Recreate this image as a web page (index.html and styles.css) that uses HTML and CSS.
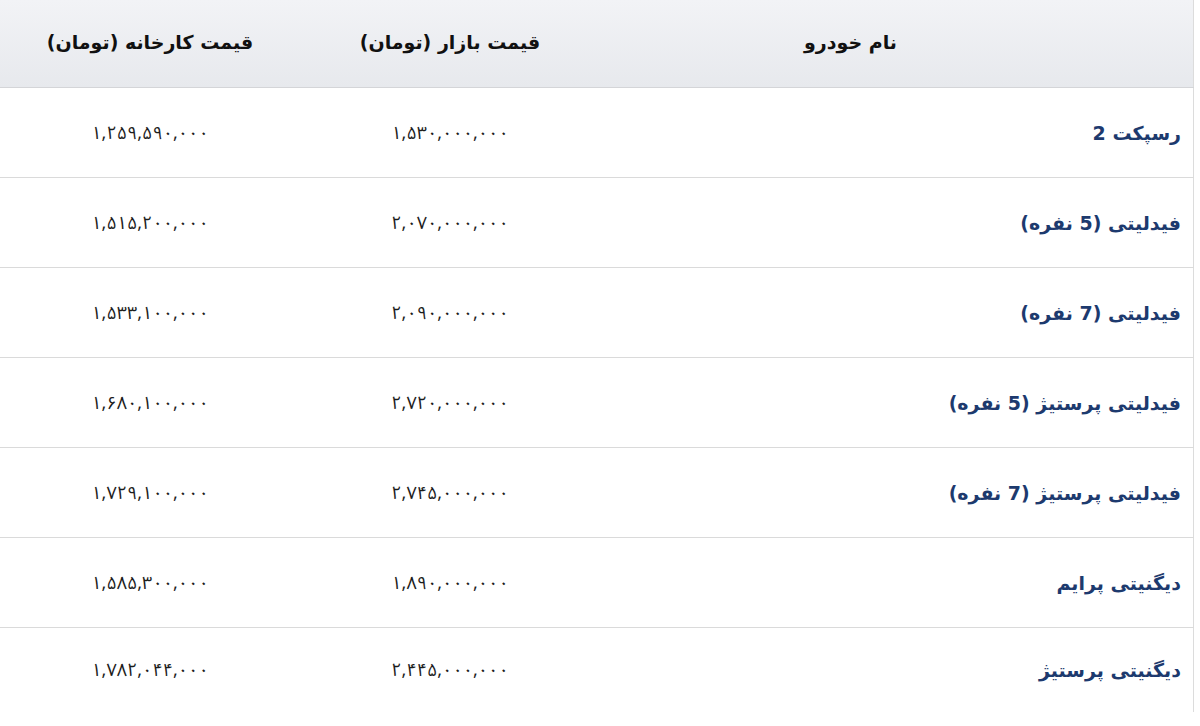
FILE: index.html
```html
<!DOCTYPE html>
<html lang="fa" dir="rtl">
<head>
<meta charset="utf-8">
<title>قیمت خودرو</title>
<link rel="stylesheet" href="styles.css">
</head>
<body>
<table class="prices">
  <thead>
    <tr>
      <th class="col-name">نام خودرو</th>
      <th class="col-market">قیمت بازار (تومان)</th>
      <th class="col-factory">قیمت کارخانه (تومان)</th>
    </tr>
  </thead>
  <tbody>
    <tr><td class="car">رسپکت 2</td><td class="num">۱,۵۳۰,۰۰۰,۰۰۰</td><td class="num">۱,۲۵۹,۵۹۰,۰۰۰</td></tr>
    <tr><td class="car">فیدلیتی (5 نفره)</td><td class="num">۲,۰۷۰,۰۰۰,۰۰۰</td><td class="num">۱,۵۱۵,۲۰۰,۰۰۰</td></tr>
    <tr><td class="car">فیدلیتی (7 نفره)</td><td class="num">۲,۰۹۰,۰۰۰,۰۰۰</td><td class="num">۱,۵۳۳,۱۰۰,۰۰۰</td></tr>
    <tr><td class="car">فیدلیتی پرستیژ (5 نفره)</td><td class="num">۲,۷۲۰,۰۰۰,۰۰۰</td><td class="num">۱,۶۸۰,۱۰۰,۰۰۰</td></tr>
    <tr><td class="car">فیدلیتی پرستیژ (7 نفره)</td><td class="num">۲,۷۴۵,۰۰۰,۰۰۰</td><td class="num">۱,۷۲۹,۱۰۰,۰۰۰</td></tr>
    <tr><td class="car">دیگنیتی پرایم</td><td class="num">۱,۸۹۰,۰۰۰,۰۰۰</td><td class="num">۱,۵۸۵,۳۰۰,۰۰۰</td></tr>
    <tr><td class="car">دیگنیتی پرستیژ</td><td class="num">۲,۴۴۵,۰۰۰,۰۰۰</td><td class="num">۱,۷۸۲,۰۴۴,۰۰۰</td></tr>
  </tbody>
</table>
</body>
</html>
```
FILE: styles.css
```css
html, body {
  margin: 0;
  padding: 0;
  background: #ffffff;
}
body {
  width: 1200px;
  font-family: "DejaVu Sans", "Noto Sans", sans-serif;
}
.prices {
  width: 1193px;
  margin: 0 auto 0 0;
  border-collapse: collapse;
  table-layout: fixed;
  border-right: 1px solid #dcdcdc;
}
.prices th {
  height: 83px;
  padding: 0 0 4px 0;
  background: linear-gradient(#f2f3f6, #e7e9ed);
  border-bottom: 1px solid #d4d5d8;
  color: #111111;
  font-size: 19px;
  font-weight: bold;
  text-align: center;
  vertical-align: middle;
}
.prices th.col-name {
  width: 501px;
  padding-right: 92px;
}
.col-market { width: 300px; }
.col-factory { width: 300px; }
.prices td {
  height: 89px;
  padding: 0;
  border-bottom: 1px solid #dadada;
  vertical-align: middle;
}
.prices tbody tr:last-child td {
  border-bottom: none;
  height: 84px;
}
.prices td.car {
  text-align: right;
  padding-right: 12px;
  color: #1d3a6e;
  font-size: 19px;
  font-weight: bold;
}
.prices td.num {
  text-align: center;
  color: #1c1c1c;
  font-family: "Noto Sans Arabic", "Noto Naskh Arabic", "DejaVu Sans", sans-serif;
  font-size: 18px;
  letter-spacing: 1.2px;
}
```
